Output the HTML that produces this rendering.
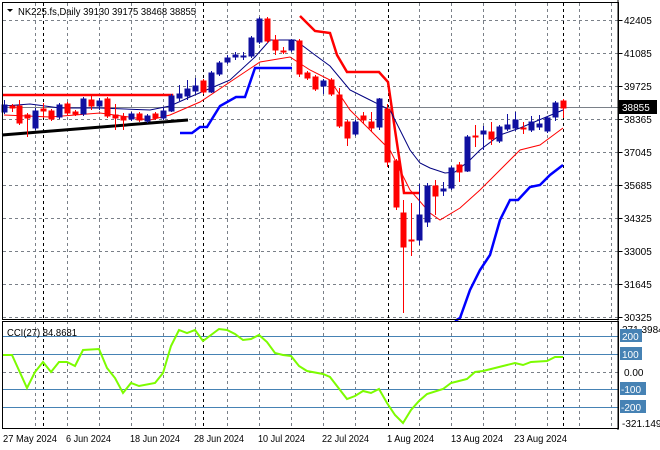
<!DOCTYPE html>
<html><head><meta charset="utf-8"><style>
html,body{margin:0;padding:0;background:#fff;width:660px;height:450px;overflow:hidden}
svg{display:block;font-family:"Liberation Sans",sans-serif}
</style></head><body>
<svg width="660" height="450" viewBox="0 0 660 450" xmlns="http://www.w3.org/2000/svg">
<rect width="660" height="450" fill="#fff"/>
<g stroke="#7a8088" stroke-width="1" stroke-dasharray="3,3" fill="none">
<path d="M3 20.5H618M3 53.5H618M3 86.5H618M3 119.5H618M3 152.5H618M3 185.5H618M3 218.5H618M3 251.5H618M3 284.5H618M3 317.5H618M3 372.5H618"/>
<path d="M35.5 3V428M67.5 3V428M99.5 3V428M131.5 3V428M163.5 3V428M195.5 3V428M227.5 3V428M259.5 3V428M291.5 3V428M323.5 3V428M355.5 3V428M419.5 3V428M451.5 3V428M483.5 3V428M515.5 3V428M547.5 3V428M579.5 3V428M611.5 3V428"/>
</g>
<g stroke="#000" stroke-width="1" stroke-dasharray="3,3" fill="none">
<path d="M43.5 3V428M203.5 3V428M388.5 3V428M563.5 3V428"/>
</g>
<line x1="3" y1="107.5" x2="618" y2="107.5" stroke="#7a8088"/>
<g stroke="#4682b4" stroke-width="1">
<path d="M3 336.5H618M3 354.5H618M3 389.5H618M3 407.5H618"/>
</g>
<polyline points="2,135 188,120" stroke="#000" stroke-width="3" fill="none"/>
<polyline points="2,95 172,95 172,98" stroke="#f00" stroke-width="2.5" fill="none"/>
<polyline points="300,16 315,31 330,33 337,55 347,72 379,72 388,82 395,130 401,170 404,193 419,193" stroke="#f00" stroke-width="2.5" fill="none"/>
<polyline points="180,133 192,133 200,127 207,127 220,106 236,97 245,97 255,68 260,68 292,68" stroke="#0000ff" stroke-width="2.5" fill="none"/>
<polyline points="455,321 460,318 470,290 480,270 490,255 500,220 510,200 518,200 530,187 540,185 550,175 563,165" stroke="#0000ff" stroke-width="2.5" fill="none"/>
<polyline points="4,106 30,104 60,108 100,108 150,110 170,106 190,97 230,80 255,57 270,40 295,40 315,55 330,66 350,90 370,100 390,110 400,130 410,150 420,163 430,168 445,173 455,172 470,160 480,150 500,135 520,128 563,110" stroke="#000080" stroke-width="1" fill="none"/>
<polyline points="4,115 50,117 100,113 150,120 170,115 200,102 230,82 260,62 290,57 310,70 330,80 350,110 370,130 390,150 410,190 430,213 440,220 460,208 480,190 500,170 520,150 540,145 563,128" stroke="#f00" stroke-width="1" fill="none"/>
<g stroke-width="1">
<g stroke="#1010a0" fill="#1010a0">
<path d="M4.5 100V114M35.5 108V130M59.5 103V119M83.5 97V116M99.5 98V110M131.5 112V121M147.5 114V123M163.5 108V120M171.5 94V112M179.5 85V101M187.5 80V100M195.5 78V94M211.5 71V93M219.5 61V76M227.5 55V64M235.5 52V60M243.5 52V60M251.5 36V58M259.5 17V44M291.5 39V52M323.5 79V94M355.5 120V136M379.5 98V130M419.5 184V245M427.5 183V227M443.5 182V196M451.5 166V190M467.5 135V172M483.5 126V150M499.5 125V143M507.5 114V131M515.5 112V131M531.5 116V132M539.5 115V130M547.5 116V133M555.5 101V121"/>
<rect x="2" y="105" width="5" height="7"/><rect x="33" y="111" width="5" height="17"/><rect x="57" y="105" width="5" height="12"/><rect x="81" y="99" width="5" height="15"/><rect x="97" y="101" width="5" height="5"/><rect x="129" y="114" width="5" height="5"/><rect x="145" y="116" width="5" height="5"/><rect x="161" y="111" width="5" height="7"/><rect x="169" y="96" width="5" height="15"/><rect x="177" y="94" width="5" height="4"/><rect x="185" y="89" width="5" height="7"/><rect x="193" y="86" width="5" height="5"/><rect x="209" y="73" width="5" height="19"/><rect x="217" y="63" width="5" height="11"/><rect x="225" y="58" width="5" height="4"/><rect x="233" y="55" width="5" height="2"/><rect x="241" y="56" width="5" height="1"/><rect x="249" y="38" width="5" height="18"/><rect x="257" y="19" width="5" height="23"/><rect x="289" y="41" width="5" height="9"/><rect x="321" y="81" width="5" height="5"/><rect x="353" y="122" width="5" height="12"/><rect x="377" y="99" width="5" height="28"/><rect x="417" y="215" width="5" height="25"/><rect x="425" y="186" width="5" height="36"/><rect x="441" y="189" width="5" height="2"/><rect x="449" y="168" width="5" height="20"/><rect x="465" y="137" width="5" height="34"/><rect x="481" y="131" width="5" height="3"/><rect x="497" y="127" width="5" height="14"/><rect x="505" y="125" width="5" height="4"/><rect x="513" y="120" width="5" height="8"/><rect x="529" y="122" width="5" height="8"/><rect x="537" y="124" width="5" height="3"/><rect x="545" y="118" width="5" height="13"/><rect x="553" y="103" width="5" height="14"/>
</g>
<g stroke="#f00" fill="#f00">
<path d="M12.5 104V112M19.5 100V125M27.5 113V137M43.5 103V118M51.5 109V121M67.5 102V115M75.5 110V116M91.5 96V110M107.5 97V118M115.5 104V130M123.5 113V130M139.5 112V122M155.5 112V120M203.5 79V94M267.5 17V43M275.5 35V55M283.5 47V54M299.5 39V77M307.5 71V80M315.5 75V91M331.5 78V96M339.5 88V128M347.5 120V146M363.5 112V124M371.5 112V132M387.5 104V167M396.5 159V210M403.5 200V313M411.5 203V256M435.5 180V215M459.5 162V182M475.5 125V147M491.5 122V145M523.5 122V134M563.5 99V118"/>
<rect x="10" y="106" width="5" height="2"/><rect x="17" y="106" width="5" height="17"/><rect x="25" y="115" width="5" height="3"/><rect x="41" y="109" width="5" height="2"/><rect x="49" y="111" width="5" height="8"/><rect x="65" y="104" width="5" height="9"/><rect x="73" y="112" width="5" height="2"/><rect x="89" y="100" width="5" height="6"/><rect x="105" y="99" width="5" height="17"/><rect x="113" y="115" width="5" height="3"/><rect x="121" y="117" width="5" height="3"/><rect x="137" y="114" width="5" height="6"/><rect x="153" y="114" width="5" height="4"/><rect x="201" y="81" width="5" height="11"/><rect x="265" y="19" width="5" height="22"/><rect x="273" y="40" width="5" height="10"/><rect x="281" y="51" width="5" height="1"/><rect x="297" y="41" width="5" height="33"/><rect x="305" y="73" width="5" height="5"/><rect x="313" y="77" width="5" height="12"/><rect x="329" y="80" width="5" height="14"/><rect x="337" y="95" width="5" height="31"/><rect x="345" y="122" width="5" height="16"/><rect x="361" y="116" width="5" height="4"/><rect x="369" y="122" width="5" height="6"/><rect x="385" y="109" width="5" height="53"/><rect x="394" y="161" width="5" height="46"/><rect x="401" y="213" width="5" height="34"/><rect x="409" y="240" width="5" height="1"/><rect x="433" y="186" width="5" height="10"/><rect x="457" y="165" width="5" height="7"/><rect x="473" y="136" width="5" height="1"/><rect x="489" y="132" width="5" height="7"/><rect x="521" y="128" width="5" height="1"/><rect x="561" y="101" width="5" height="7"/>
</g>
</g>
<polyline points="2,355 12,355 27,388 35,372 43,362 51,372 59,362 67,362 75,366 83,350 99,349 107,368 115,378 123,393 131,383 139,386 155,383 163,373 171,346 179,330 187,333 195,330 203,341 211,335 219,329 227,330 235,334 243,340 251,339 259,335 267,342 275,353 283,355 291,356 299,366 307,371 323,374 330,377 347,399 355,396 363,391 371,393 379,389 387,403 395,415 403,423 411,410 419,401 427,394 443,389 451,383 459,381 467,379 475,372 483,371 491,369 499,367 507,365 515,363 523,365 531,362 547,361 555,357 563,357" stroke="#7cfc00" stroke-width="2" fill="none"/>
<g stroke="#000" fill="none">
<rect x="2.5" y="2.5" width="616" height="317"/>
<rect x="2.5" y="321.5" width="616" height="107"/>
</g>
<line x1="618" y1="0" x2="618" y2="430" stroke="#000"/>
<g stroke="#000"><path d="M618.5 20.5h4M618.5 53.5h4M618.5 86.5h4M618.5 119.5h4M618.5 152.5h4M618.5 185.5h4M618.5 218.5h4M618.5 251.5h4M618.5 284.5h4M618.5 317.5h4"/></g>
<polygon points="7,9 13,9 10,12" fill="#000"/>
<g font-size="10.5" fill="#000">
<text x="18" y="15" textLength="178" lengthAdjust="spacingAndGlyphs">NK225.fs,Daily  39130 39175 38468 38855</text>
<text x="7" y="336" textLength="70" lengthAdjust="spacingAndGlyphs">CCI(27) 84.8681</text>
</g>
<g font-size="10" fill="#000">
<text x="624" y="24">42405</text><text x="624" y="57">41085</text><text x="624" y="90">39725</text><text x="624" y="123">38365</text><text x="624" y="156">37045</text><text x="624" y="189">35685</text><text x="624" y="222">34325</text><text x="624" y="255">33005</text><text x="624" y="288">31645</text><text x="624" y="321">30325</text>
<text x="622" y="333">271.3984</text>
<text x="624" y="376">0.00</text>
<text x="622" y="427">-321.149</text>
</g>
<rect x="619" y="100" width="38" height="14" fill="#000"/>
<text x="622" y="111" font-size="10" fill="#fff">38855</text>
<g font-size="10" fill="#fff">
<rect x="620" y="329" width="22" height="13" fill="#4682b4"/><text x="622" y="340">200</text>
<rect x="620" y="347" width="22" height="13" fill="#4682b4"/><text x="622" y="358">100</text>
<rect x="620" y="382" width="26" height="13" fill="#4682b4"/><text x="621" y="393">-100</text>
<rect x="620" y="400" width="26" height="13" fill="#4682b4"/><text x="621" y="411">-200</text>
</g>
<g font-size="10" fill="#000" lengthAdjust="spacingAndGlyphs">
<text x="3" y="442" textLength="54" lengthAdjust="spacingAndGlyphs">27 May 2024</text>
<text x="66" y="442" textLength="45" lengthAdjust="spacingAndGlyphs">6 Jun 2024</text>
<text x="130" y="442" textLength="50" lengthAdjust="spacingAndGlyphs">18 Jun 2024</text>
<text x="194" y="442" textLength="50" lengthAdjust="spacingAndGlyphs">28 Jun 2024</text>
<text x="258" y="442" textLength="47" lengthAdjust="spacingAndGlyphs">10 Jul 2024</text>
<text x="322" y="442" textLength="47" lengthAdjust="spacingAndGlyphs">22 Jul 2024</text>
<text x="387" y="442" textLength="47" lengthAdjust="spacingAndGlyphs">1 Aug 2024</text>
<text x="451" y="442" textLength="52" lengthAdjust="spacingAndGlyphs">13 Aug 2024</text>
<text x="514" y="442" textLength="53" lengthAdjust="spacingAndGlyphs">23 Aug 2024</text>
</g>
</svg>
</body></html>
